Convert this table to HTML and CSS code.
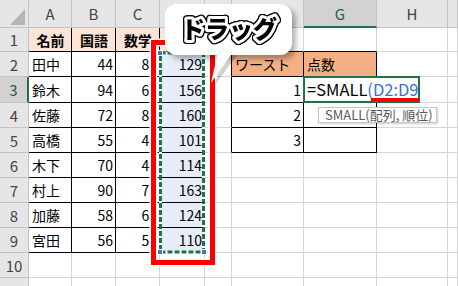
FILE: index.html
```html
<!DOCTYPE html>
<html lang="ja">
<head>
<meta charset="utf-8">
<title>SMALL</title>
<link rel="stylesheet" href="styles.css">
</head>
<body>
<div class="wrap">
  <div class="sheet">
    <div class="c h corner"><svg width="28" height="27"><polygon points="10,25 25,25 25,9" fill="#b5b5b5"/></svg></div>
    <div class="c h">A</div><div class="c h">B</div><div class="c h">C</div><div class="c h">D</div><div class="c h">E</div><div class="c h">F</div><div class="c h act col">G</div><div class="c h">H</div><div class="c h"></div>

    <div class="c rh">1</div>
    <div class="c t pe b ctr">名前</div><div class="c t pe b ctr">国語</div><div class="c t pe b ctr">数学</div><div class="c t pe b ctr">合計</div>
    <div class="c"></div><div class="c bb"></div><div class="c bb"></div><div class="c"></div><div class="c"></div>

    <div class="c rh">2</div>
    <div class="c t">田中</div><div class="c t n">44</div><div class="c t n">85</div><div class="c t n sel">129</div>
    <div class="c br"></div><div class="c t or">ワースト</div><div class="c t or">点数</div><div class="c"></div><div class="c"></div>

    <div class="c rh act row">3</div>
    <div class="c t">鈴木</div><div class="c t n">94</div><div class="c t n">62</div><div class="c t n sel">156</div>
    <div class="c br"></div><div class="c t n">1</div><div class="c t"></div><div class="c"></div><div class="c"></div>

    <div class="c rh">4</div>
    <div class="c t">佐藤</div><div class="c t n">72</div><div class="c t n">88</div><div class="c t n sel">160</div>
    <div class="c br"></div><div class="c t n">2</div><div class="c t"></div><div class="c"></div><div class="c"></div>

    <div class="c rh">5</div>
    <div class="c t">高橋</div><div class="c t n">55</div><div class="c t n">46</div><div class="c t n sel">101</div>
    <div class="c br"></div><div class="c t n">3</div><div class="c t"></div><div class="c"></div><div class="c"></div>

    <div class="c rh">6</div>
    <div class="c t">木下</div><div class="c t n">70</div><div class="c t n">44</div><div class="c t n sel">114</div>
    <div class="c"></div><div class="c"></div><div class="c"></div><div class="c"></div><div class="c"></div>

    <div class="c rh">7</div>
    <div class="c t">村上</div><div class="c t n">90</div><div class="c t n">73</div><div class="c t n sel">163</div>
    <div class="c"></div><div class="c"></div><div class="c"></div><div class="c"></div><div class="c"></div>

    <div class="c rh">8</div>
    <div class="c t">加藤</div><div class="c t n">58</div><div class="c t n">66</div><div class="c t n sel">124</div>
    <div class="c"></div><div class="c"></div><div class="c"></div><div class="c"></div><div class="c"></div>

    <div class="c rh">9</div>
    <div class="c t">宮田</div><div class="c t n">56</div><div class="c t n">54</div><div class="c t n sel">110</div>
    <div class="c"></div><div class="c"></div><div class="c"></div><div class="c"></div><div class="c"></div>

    <div class="c rh">10</div>
    <div class="c"></div><div class="c"></div><div class="c"></div><div class="c"></div>
    <div class="c"></div><div class="c"></div><div class="c"></div><div class="c"></div><div class="c"></div>

    <div class="c rh">11</div>
    <div class="c"></div><div class="c"></div><div class="c"></div><div class="c"></div>
    <div class="c"></div><div class="c"></div><div class="c"></div><div class="c"></div><div class="c"></div>
  </div>

  <svg class="ov" width="458" height="286" viewBox="0 0 458 286">
    <rect x="153.5" y="42.5" width="59" height="220" fill="none" stroke="#ffffff" stroke-width="8"/>
    <rect x="153.5" y="42.5" width="59" height="220" fill="none" stroke="#ff0000" stroke-width="5"/>
    <rect x="160.5" y="53" width="43" height="199" fill="none" stroke="#ffffff" stroke-width="3"/>
    <rect x="160.5" y="53" width="43" height="199" fill="none" stroke="#217346" stroke-width="3" stroke-dasharray="5 2"/>
    <rect x="157.5" y="50.5" width="5" height="5" fill="#4472c4" stroke="#ffffff" stroke-width="1"/>
    <rect x="157.5" y="249.5" width="5" height="5" fill="#4472c4" stroke="#ffffff" stroke-width="1"/>
    <rect x="201.5" y="249.5" width="5" height="5" fill="#4472c4" stroke="#ffffff" stroke-width="1"/>
  </svg>

  <div class="editor">=SMALL<span class="ref">(D2:D9</span><i class="caret"></i></div>
  <div class="uline"></div>
  <div class="tip">SMALL(配列, 順位)</div>

  <div class="bubble">
    <svg class="dragsvg" width="127" height="51" viewBox="0 0 127 51">
      <text class="drag" x="64" y="34" text-anchor="middle">ドラッグ</text>
    </svg>
  </div>
  <svg class="ov" width="458" height="286" viewBox="0 0 458 286">
    <polygon points="222,55 237,55 215,85" fill="#000" fill-opacity="0.18"/>
    <polygon points="218,52 233,52 211,83" fill="#ffffff"/>
  </svg>
</div>
</body>
</html>
```

FILE: styles.css
```css
body {
  margin: 0;
  background: #fff;
  overflow: hidden;
  font-family: "Noto Sans CJK JP", "Noto Sans", sans-serif;
}

.wrap {
  position: relative;
  width: 458px;
  height: 286px;
  overflow: hidden;
}

.sheet {
  display: grid;
  grid-template-columns: 29px 43px 44px 44px 45px 27px 72px 73px 71px 10px;
  grid-template-rows: 28px 24px 25px 26px repeat(8, 25px);
}

.c {
  box-sizing: border-box;
  border-right: 1px solid #d4d4d4;
  border-bottom: 1px solid #d4d4d4;
  display: flex;
  align-items: center;
  padding: 0 2px 0 3px;
  font-size: 14px;
  line-height: 1;
  color: #000;
  white-space: nowrap;
  overflow: hidden;
}

.h, .rh {
  background: #e6e6e6;
  border-right-color: #c3c3c3;
  border-bottom-color: #c3c3c3;
  justify-content: center;
  color: #444;
  padding: 0;
  font-size: 15px;
}

.corner {
  align-items: flex-end;
  justify-content: flex-end;
}

.act { background: #d2d2d2; color: #2b5d3e; }
.act.col { border-bottom: 2px solid #217346; }
.act.row { border-right: 2px solid #217346; }

.ctr { justify-content: center; }
.n { justify-content: flex-end; }
.b { font-weight: 700; }

.t {
  border-right-color: #000;
  border-bottom-color: #000;
}
.br { border-right-color: #000; }
.bb { border-bottom-color: #000; }

.pe { background: #fce4d6; }
.or { background: #f4b084; }
.sel { background: #e6edf7; }

.ov {
  position: absolute;
  left: 0;
  top: 0;
  pointer-events: none;
}

.editor {
  position: absolute;
  left: 303px;
  top: 76px;
  width: 117px;
  height: 27px;
  box-sizing: border-box;
  border: 2px solid #217346;
  background: #fff;
  display: flex;
  align-items: center;
  padding-left: 2px;
  font-size: 16.5px;
  line-height: 1;
  color: #000;
  white-space: nowrap;
}

.ref { color: #3b6fcf; }

.caret {
  display: inline-block;
  width: 1px;
  height: 20px;
  background: #000;
  margin-left: 1px;
}

.uline {
  position: absolute;
  left: 371px;
  top: 98px;
  width: 48px;
  height: 4px;
  background: #ff0000;
}

.tip {
  position: absolute;
  left: 318px;
  top: 107px;
  width: 119px;
  height: 16px;
  box-sizing: border-box;
  border: 1px solid #c4c4c4;
  background: #fff;
  box-shadow: 1px 1px 2px rgba(0, 0, 0, 0.2);
  font-size: 13px;
  line-height: 14px;
  color: #595959;
  padding-left: 6px;
  white-space: nowrap;
}

.bubble {
  position: absolute;
  left: 165px;
  top: 4px;
  width: 127px;
  height: 51px;
  background: #fff;
  border-radius: 12px;
  box-shadow: 4px 4px 5px rgba(0, 0, 0, 0.3);
}

.dragsvg {
  display: block;
}

.drag {
  font-family: "Noto Sans CJK JP", sans-serif;
  font-size: 24px;
  font-weight: 900;
  fill: #000;
  stroke: #fff;
  stroke-width: 6px;
  stroke-linejoin: round;
  paint-order: stroke;
  filter: drop-shadow(1px 0 0 #000) drop-shadow(-1px 0 0 #000) drop-shadow(0 1px 0 #000) drop-shadow(0 -1px 0 #000);
}
```
